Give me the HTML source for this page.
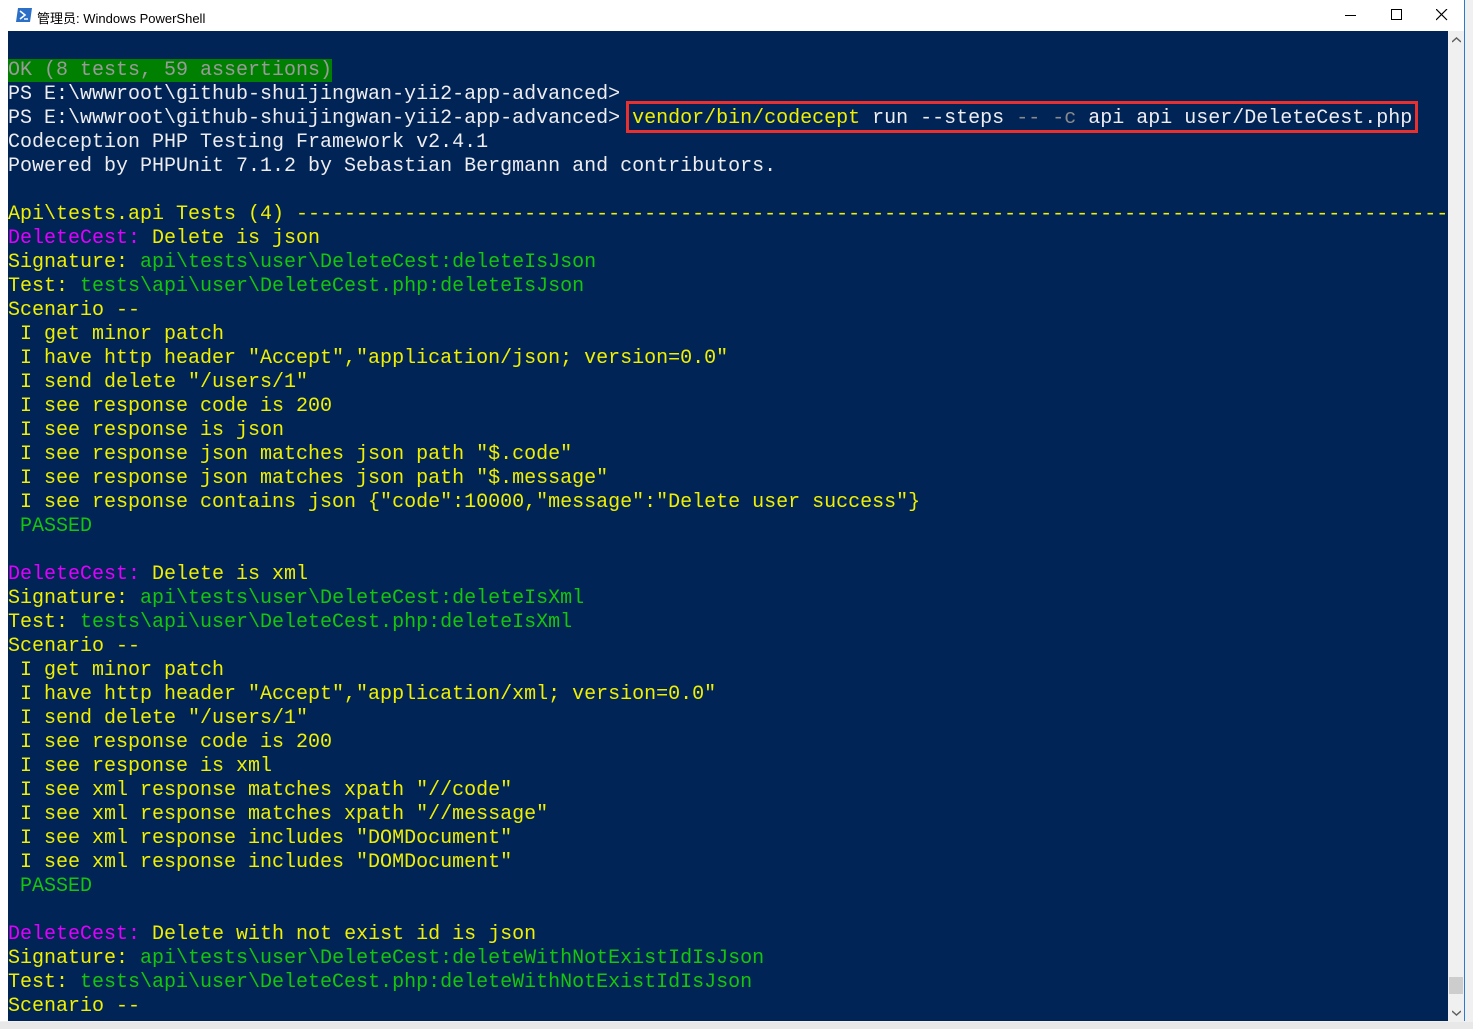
<!DOCTYPE html>
<html><head><meta charset="utf-8"><style>
body{margin:0;width:1473px;height:1029px;background:#f0f0f0;position:relative;overflow:hidden;font-family:"Liberation Sans","Noto Sans CJK SC",sans-serif}
.win{position:absolute;left:0;top:0;width:1464px;height:1021px;border-right:1px solid #2b79d0;background:#fff}
.title{position:absolute;left:0;top:0;width:1464px;height:31px;background:#fff;font-size:13px}
.title .t{position:absolute;left:37px;top:8px;color:#000}
.term{position:absolute;left:8px;top:31px;width:1440px;height:990px;background:#012456;overflow:hidden}
.sb{position:absolute;left:1448px;top:31px;width:16px;height:990px;background:#f0f0f0}
pre{margin:0;position:absolute;left:0;top:28px;font-family:"Liberation Mono","Noto Sans CJK SC",monospace;font-size:20px;line-height:24px;color:#eeedf0;white-space:pre}
.y{color:#f0f000}.g{color:#16c60c}.m{color:#e000ff}.w{color:#eeedf0}.gr{color:#8a8a8a}
.ok{background:#008000;color:#9a9a9a}
.box{position:absolute;left:626px;top:101px;width:786px;height:26px;border:3px solid #e8302f}
.status{position:absolute;left:0;top:1022px;width:1473px;height:7px;background:#e8e8e8}
</style></head><body>
<div class="win">
<div class="title">
<svg style="position:absolute;left:16px;top:8px" width="16" height="14"><polygon points="2,0 16,0 14,14 0,14" fill="#2b6fc6"/><polyline points="4,3 9,7 4,11" stroke="#fff" stroke-width="1.6" fill="none"/><line x1="8" y1="11" x2="12" y2="11" stroke="#fff" stroke-width="1.4"/></svg>
<span class="t">管理员: Windows PowerShell</span>
<div style="position:absolute;left:1345px;top:15px;width:11px;height:1px;background:#000"></div>
<div style="position:absolute;left:1391px;top:9px;width:9px;height:9px;border:1px solid #000"></div>
<svg style="position:absolute;left:1436px;top:9px" width="12" height="12"><path d="M0,0L11,11M11,0L0,11" stroke="#000" stroke-width="1.2"/></svg>
</div>
<div class="term"><pre><span class="ok">OK (8 tests, 59 assertions)</span>
PS E:\wwwroot\github-shuijingwan-yii2-app-advanced&gt;
PS E:\wwwroot\github-shuijingwan-yii2-app-advanced&gt; <span class="y">vendor/bin/codecept</span> run --steps <span class="gr">-- -c</span> api api user/DeleteCest.php
Codeception PHP Testing Framework v2.4.1
Powered by PHPUnit 7.1.2 by Sebastian Bergmann and contributors.

<span class="y">Api\tests.api Tests (4) ---------------------------------------------------------------------------------------------------------</span>
<span class="m">DeleteCest:</span><span class="y"> Delete is json</span>
<span class="y">Signature: </span><span class="g">api\tests\user\DeleteCest:deleteIsJson</span>
<span class="y">Test: </span><span class="g">tests\api\user\DeleteCest.php:deleteIsJson</span>
<span class="y">Scenario --
 I get minor patch
 I have http header "Accept","application/json; version=0.0"
 I send delete "/users/1"
 I see response code is 200
 I see response is json
 I see response json matches json path "$.code"
 I see response json matches json path "$.message"
 I see response contains json {"code":10000,"message":"Delete user success"}</span>
<span class="g"> PASSED</span>

<span class="m">DeleteCest:</span><span class="y"> Delete is xml</span>
<span class="y">Signature: </span><span class="g">api\tests\user\DeleteCest:deleteIsXml</span>
<span class="y">Test: </span><span class="g">tests\api\user\DeleteCest.php:deleteIsXml</span>
<span class="y">Scenario --
 I get minor patch
 I have http header "Accept","application/xml; version=0.0"
 I send delete "/users/1"
 I see response code is 200
 I see response is xml
 I see xml response matches xpath "//code"
 I see xml response matches xpath "//message"
 I see xml response includes "DOMDocument"
 I see xml response includes "DOMDocument"</span>
<span class="g"> PASSED</span>

<span class="m">DeleteCest:</span><span class="y"> Delete with not exist id is json</span>
<span class="y">Signature: </span><span class="g">api\tests\user\DeleteCest:deleteWithNotExistIdIsJson</span>
<span class="y">Test: </span><span class="g">tests\api\user\DeleteCest.php:deleteWithNotExistIdIsJson</span>
<span class="y">Scenario --</span>
</pre></div>
<div class="sb">
<svg style="position:absolute;left:4px;top:6px" width="9" height="6"><path d="M0,5L4.5,1L9,5" stroke="#606060" stroke-width="1.5" fill="none"/></svg>
<div style="position:absolute;left:1px;top:946px;width:14px;height:17px;background:#cdcdcd"></div>
<svg style="position:absolute;left:4px;top:979px" width="9" height="6"><path d="M0,1L4.5,5L9,1" stroke="#606060" stroke-width="1.5" fill="none"/></svg>
</div>
<div class="box"></div>
</div>
<div class="status"></div>
</body></html>
